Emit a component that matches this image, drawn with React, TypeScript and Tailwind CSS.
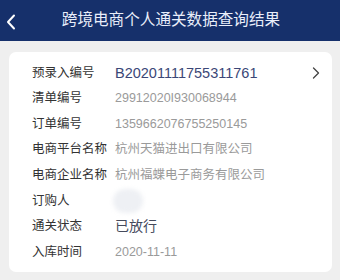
import React from "react";

const font = { fontFamily: '"Liberation Sans", "Noto Sans CJK SC", sans-serif' };

type Row = { label: string; value?: string; kind: "id" | "gray" | "status" | "blur" };

const rows: Row[] = [
  { label: "预录入编号", value: "B20201111755311761", kind: "id" },
  { label: "清单编号", value: "29912020I930068944", kind: "gray" },
  { label: "订单编号", value: "1359662076755250145", kind: "gray" },
  { label: "电商平台名称", value: "杭州天猫进出口有限公司", kind: "gray" },
  { label: "电商企业名称", value: "杭州福蝶电子商务有限公司", kind: "gray" },
  { label: "订购人", kind: "blur" },
  { label: "通关状态", value: "已放行", kind: "status" },
  { label: "入库时间", value: "2020-11-11", kind: "gray" },
];

export default function App() {
  return (
    <div className="w-[340px] h-[280px] bg-[#efefef] overflow-hidden" style={font}>
      <div className="h-[41px] bg-[#16306b] flex items-center relative">
        <svg className="absolute left-[6px] top-[14px]" width="10" height="16" viewBox="0 0 10 16">
          <path d="M8 1.5 L2 8 L8 14.5" fill="none" stroke="#ffffff" strokeWidth="2" strokeLinecap="round" strokeLinejoin="round" />
        </svg>
        <div className="w-full text-center text-[15.6px] text-[#e9eefa] leading-none pl-[2px] pb-[1px]">
          跨境电商个人通关数据查询结果
        </div>
      </div>
      <div className="mx-[9px] mt-[11px] bg-white rounded-[7px] pt-[8px] pb-[7px] w-[323px]">
        {rows.map((r, i) => (
          <div key={i} className="h-[25.6px] flex items-center pl-[23px] relative">
            <div className="w-[83px] text-[12.5px] text-[#333333] leading-none">{r.label}</div>
            {r.kind === "id" && (
              <div className="text-[14.5px] text-[#3b4777] leading-none">{r.value}</div>
            )}
            {r.kind === "gray" && (
              <div className="text-[12.5px] text-[#9a9a9a] leading-none">{r.value}</div>
            )}
            {r.kind === "status" && (
              <div className="text-[14px] text-[#454a5c] leading-none">{r.value}</div>
            )}
            {r.kind === "blur" && (
              <div className="w-[30px] h-[24px] rounded-full bg-[#eef0f4] blur-[2px] -ml-[2px]"></div>
            )}
            {r.kind === "id" && (
              <svg className="absolute right-[12px] top-[7px]" width="8" height="12" viewBox="0 0 8 12">
                <path d="M1.5 1 L6.5 6 L1.5 11" fill="none" stroke="#444444" strokeWidth="1.3" strokeLinecap="round" strokeLinejoin="round" />
              </svg>
            )}
          </div>
        ))}
      </div>
    </div>
  );
}
